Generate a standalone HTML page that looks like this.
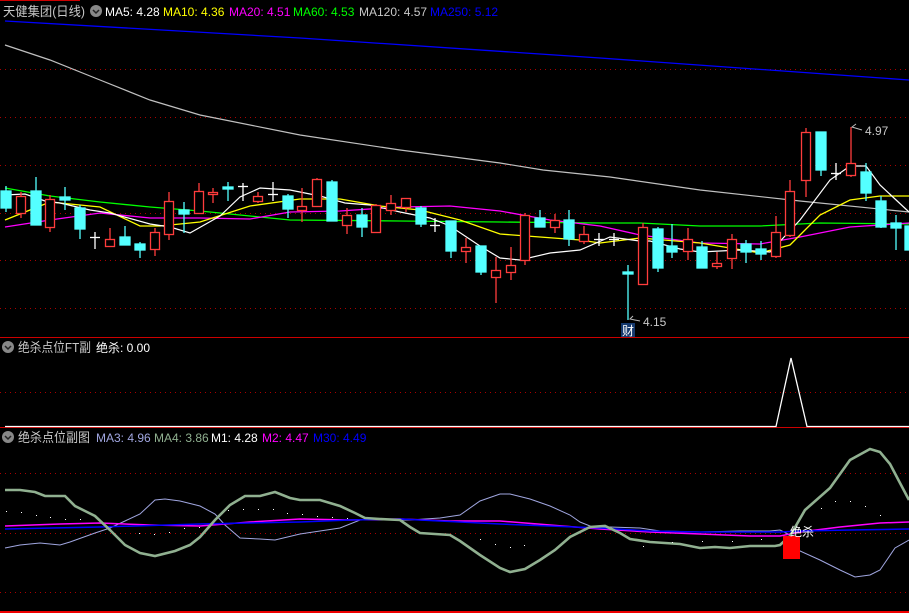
<!DOCTYPE html>
<html><head><meta charset="utf-8"><style>
html,body{margin:0;padding:0;background:#000;width:909px;height:613px;overflow:hidden}
svg{display:block}
text{font-family:"Liberation Sans","Noto Sans CJK SC",sans-serif;font-size:12px}
</style></head><body>
<svg width="909" height="613" viewBox="0 0 909 613" xmlns="http://www.w3.org/2000/svg">
<rect width="909" height="613" fill="#000"/>
<line x1="0" y1="0.5" x2="80" y2="0.5" stroke="#c00"/>
<g stroke="#a00" stroke-dasharray="1,4" stroke-width="1">
<line x1="0" y1="69.5" x2="909" y2="69.5"/><line x1="0" y1="117.5" x2="909" y2="117.5"/>
<line x1="0" y1="165.5" x2="909" y2="165.5"/><line x1="0" y1="213.5" x2="909" y2="213.5"/>
<line x1="0" y1="260.5" x2="909" y2="260.5"/><line x1="0" y1="308.5" x2="909" y2="308.5"/>
<line x1="0" y1="392.5" x2="909" y2="392.5"/>
<line x1="0" y1="473.5" x2="909" y2="473.5"/><line x1="0" y1="533.5" x2="909" y2="533.5"/><line x1="0" y1="592.5" x2="909" y2="592.5"/>
</g>
<line x1="0" y1="337.5" x2="909" y2="337.5" stroke="#c00"/>
<line x1="0" y1="427.5" x2="909" y2="427.5" stroke="#c00"/>
<line x1="0" y1="612" x2="909" y2="612" stroke="#e00" stroke-width="2"/>

<polyline fill="none" stroke="#0000ff" stroke-width="1.3" points="5,21 300,38 600,58 909,80"/>
<polyline fill="none" stroke="#c0c0c0" stroke-width="1.2" points="5,45 50,60 100,80 150,100 200,115 300,135 400,150 500,163 543,170 610,177 700,190 800,201 909,212"/>
<polyline fill="none" stroke="#00ff00" stroke-width="1.3" points="5,188 50,196 100,202 150,207 200,211 290,220 400,221 500,222 600,223 640,223 700,226 760,226 820,223 909,224"/>
<polyline fill="none" stroke="#ff00ff" stroke-width="1.3" points="5,227 50,220 100,213 150,218 200,218 250,219 290,212 340,211 400,207 450,206 500,211 550,220 600,226 640,235 700,243 760,244 800,237 850,227 909,223"/>
<polyline fill="none" stroke="#ffff00" stroke-width="1.3" points="5,220 30,210 50,202 100,207 140,226 160,226 200,222 250,206 300,199 340,199 380,206 420,210 460,220 500,234 540,237 580,240 600,243 640,238 700,243 760,253 790,245 820,215 850,200 880,196 909,196"/>
<polyline fill="none" stroke="#ffffff" stroke-width="1.2" points="5,195 25,194 45,201 60,203 90,210 110,213 150,224 170,227 190,233 220,216 240,197 260,188 290,190 320,196 345,203 370,205 400,212 430,218 450,226 480,246 500,258 520,260 550,253 580,250 610,237 640,241 650,241 680,249 700,252 740,250 770,252 800,220 830,180 850,166 866,166 880,185 909,212"/>

<g stroke-width="1.3">
<g stroke="#54ffff" fill="#54ffff">
<line x1="6" y1="186" x2="6" y2="212"/><rect x="1" y="191" width="10" height="17"/>
<line x1="36" y1="177" x2="36" y2="225"/><rect x="31" y="191" width="10" height="34"/>
<line x1="65" y1="187" x2="65" y2="210"/><rect x="60" y="197" width="10" height="3"/>
<line x1="80" y1="205" x2="80" y2="239"/><rect x="75" y="208" width="10" height="21"/>
<line x1="125" y1="226" x2="125" y2="245"/><rect x="120" y="237" width="10" height="8"/>
<line x1="140" y1="242" x2="140" y2="258"/><rect x="135" y="244" width="10" height="6"/>
<line x1="184" y1="202" x2="184" y2="233"/><rect x="179" y="210" width="10" height="4"/>
<line x1="228" y1="182" x2="228" y2="201"/><rect x="223" y="187" width="10" height="2"/>
<line x1="288" y1="194" x2="288" y2="218"/><rect x="283" y="196" width="10" height="13"/>
<line x1="332" y1="180" x2="332" y2="221"/><rect x="327" y="182" width="10" height="39"/>
<line x1="362" y1="208" x2="362" y2="237"/><rect x="357" y="215" width="10" height="12"/>
<line x1="421" y1="206" x2="421" y2="227"/><rect x="416" y="208" width="10" height="16"/>
<line x1="451" y1="221" x2="451" y2="258"/><rect x="446" y="221" width="10" height="30"/>
<line x1="481" y1="246" x2="481" y2="275"/><rect x="476" y="246" width="10" height="26"/>
<line x1="540" y1="210" x2="540" y2="227"/><rect x="535" y="218" width="10" height="9"/>
<line x1="569" y1="210" x2="569" y2="246"/><rect x="564" y="220" width="10" height="19"/>
<line x1="628" y1="265" x2="628" y2="320"/><rect x="623" y="272" width="10" height="2"/>
<line x1="658" y1="227" x2="658" y2="272"/><rect x="653" y="229" width="10" height="39"/>
<line x1="672" y1="224" x2="672" y2="258"/><rect x="667" y="246" width="10" height="6"/>
<line x1="702" y1="241" x2="702" y2="268"/><rect x="697" y="247" width="10" height="21"/>
<line x1="746" y1="240" x2="746" y2="263"/><rect x="741" y="244" width="10" height="8"/>
<line x1="761" y1="241" x2="761" y2="260"/><rect x="756" y="249" width="10" height="5"/>
<line x1="821" y1="132" x2="821" y2="176"/><rect x="816" y="132" width="10" height="38"/>
<line x1="866" y1="163" x2="866" y2="201"/><rect x="861" y="172" width="10" height="21"/>
<line x1="881" y1="196" x2="881" y2="228"/><rect x="876" y="201" width="10" height="26"/>
<line x1="896" y1="215" x2="896" y2="250"/><rect x="891" y="223" width="10" height="5"/>
<rect x="905" y="226" width="10" height="24"/>
</g>
<g stroke="#ff3c3c" fill="none">
<line x1="21" y1="192" x2="21" y2="218"/><rect x="16.5" y="196.5" width="9" height="17" fill="#000"/>
<line x1="50" y1="195" x2="50" y2="232"/><rect x="45.5" y="199.5" width="9" height="28" fill="#000"/>
<line x1="110" y1="228" x2="110" y2="246"/><rect x="105.5" y="239.5" width="9" height="7" fill="#000"/>
<line x1="155" y1="228" x2="155" y2="256"/><rect x="150.5" y="232.5" width="9" height="17" fill="#000"/>
<line x1="169" y1="192" x2="169" y2="240"/><rect x="164.5" y="201.5" width="9" height="33" fill="#000"/>
<line x1="199" y1="183" x2="199" y2="214"/><rect x="194.5" y="191.5" width="9" height="22" fill="#000"/>
<line x1="213" y1="188" x2="213" y2="203"/><rect x="208.5" y="192.5" width="9" height="2" fill="#000"/>
<line x1="258" y1="192" x2="258" y2="203"/><rect x="253.5" y="196.5" width="9" height="5" fill="#000"/>
<line x1="302" y1="188" x2="302" y2="222"/><rect x="297.5" y="206.5" width="9" height="4" fill="#000"/>
<line x1="317" y1="178" x2="317" y2="206"/><rect x="312.5" y="179.5" width="9" height="27" fill="#000"/>
<line x1="347" y1="208" x2="347" y2="234"/><rect x="342.5" y="215.5" width="9" height="10" fill="#000"/>
<line x1="376" y1="204" x2="376" y2="232"/><rect x="371.5" y="205.5" width="9" height="27" fill="#000"/>
<line x1="391" y1="195" x2="391" y2="215"/><rect x="386.5" y="203.5" width="9" height="7" fill="#000"/>
<line x1="406" y1="198" x2="406" y2="212"/><rect x="401.5" y="198.5" width="9" height="9" fill="#000"/>
<line x1="466" y1="238" x2="466" y2="263"/><rect x="461.5" y="247.5" width="9" height="4" fill="#000"/>
<line x1="496" y1="257" x2="496" y2="303"/><rect x="491.5" y="270.5" width="9" height="7" fill="#000"/>
<line x1="511" y1="247" x2="511" y2="280"/><rect x="506.5" y="265.5" width="9" height="7" fill="#000"/>
<line x1="525" y1="213" x2="525" y2="265"/><rect x="520.5" y="215.5" width="9" height="45" fill="#000"/>
<line x1="555" y1="214" x2="555" y2="233"/><rect x="550.5" y="220.5" width="9" height="7" fill="#000"/>
<line x1="584" y1="226" x2="584" y2="244"/><rect x="579.5" y="234.5" width="9" height="7" fill="#000"/>
<line x1="643" y1="223" x2="643" y2="284"/><rect x="638.5" y="227.5" width="9" height="57" fill="#000"/>
<line x1="688" y1="228" x2="688" y2="260"/><rect x="683.5" y="239.5" width="9" height="12" fill="#000"/>
<line x1="717" y1="252" x2="717" y2="269"/><rect x="712.5" y="263.5" width="9" height="3" fill="#000"/>
<line x1="732" y1="234" x2="732" y2="269"/><rect x="727.5" y="239.5" width="9" height="19" fill="#000"/>
<line x1="776" y1="216" x2="776" y2="258"/><rect x="771.5" y="232.5" width="9" height="24" fill="#000"/>
<line x1="790" y1="180" x2="790" y2="237"/><rect x="785.5" y="191.5" width="9" height="44" fill="#000"/>
<line x1="806" y1="128" x2="806" y2="197"/><rect x="801.5" y="132.5" width="9" height="48" fill="#000"/>
<line x1="851" y1="127" x2="851" y2="177"/><rect x="846.5" y="163.5" width="9" height="12" fill="#000"/>
</g>
<g stroke="#fff">
<line x1="95" y1="232" x2="95" y2="249"/><line x1="90" y1="237.5" x2="100" y2="237.5"/>
<line x1="243" y1="183" x2="243" y2="201"/><line x1="238" y1="186.5" x2="248" y2="186.5"/>
<line x1="273" y1="182" x2="273" y2="201"/><line x1="268" y1="194.5" x2="278" y2="194.5"/>
<line x1="435" y1="218" x2="435" y2="232"/><line x1="430" y1="225.5" x2="440" y2="225.5"/>
<line x1="599" y1="233" x2="599" y2="246"/><line x1="594" y1="239.5" x2="604" y2="239.5"/>
<line x1="614" y1="233" x2="614" y2="246"/><line x1="609" y1="239.5" x2="619" y2="239.5"/>
<line x1="836" y1="163" x2="836" y2="180"/><line x1="831" y1="173.5" x2="841" y2="173.5"/>
</g>
</g>
<polyline fill="none" stroke="#bbb" points="862,130 852,127 856,124"/>
<text x="865" y="135" fill="#c8c8c8">4.97</text>
<polyline fill="none" stroke="#bbb" points="640,321 630,319 633,316"/>
<text x="643" y="326" fill="#c8c8c8">4.15</text>
<rect x="621" y="323" width="14" height="14" fill="#15396e"/>
<text x="622" y="335" fill="#fff">财</text>

<text x="3" y="16" fill="#c8c8c8" textLength="82" lengthAdjust="spacingAndGlyphs" style="font-size:13px">天健集团(日线)</text>
<circle cx="96" cy="11" r="6" fill="#888"/><polyline points="93,10 96,13 99,10" fill="none" stroke="#222" stroke-width="1.5"/>
<text x="105" y="16" fill="#fff">MA5: 4.28</text>
<text x="163" y="16" fill="#ffff00">MA10: 4.36</text>
<text x="229" y="16" fill="#ff00ff">MA20: 4.51</text>
<text x="293" y="16" fill="#00ff00">MA60: 4.53</text>
<text x="359" y="16" fill="#c8c8c8">MA120: 4.57</text>
<text x="430" y="16" fill="#0000ff">MA250: 5.12</text>

<circle cx="8" cy="347" r="6" fill="#888"/><polyline points="5,346 8,349 11,346" fill="none" stroke="#222" stroke-width="1.5"/>
<text x="18" y="352" fill="#c8c8c8" textLength="73" lengthAdjust="spacingAndGlyphs" style="font-size:13px">绝杀点位FT副</text>
<text x="96" y="352" fill="#fff">绝杀: 0.00</text>

<polyline fill="none" stroke="#fff" stroke-width="1.3" points="5,426.5 776,426.5 791,358 807,426.5 909,426.5"/>

<circle cx="8" cy="437" r="6" fill="#888"/><polyline points="5,436 8,439 11,436" fill="none" stroke="#222" stroke-width="1.5"/>
<text x="18" y="442" fill="#c8c8c8" textLength="72" lengthAdjust="spacingAndGlyphs" style="font-size:13px">绝杀点位副图</text>
<text x="96" y="442" fill="#a0a6e0">MA3: 4.96</text>
<text x="154" y="442" fill="#90b090">MA4: 3.86</text>
<text x="211" y="442" fill="#fff">M1: 4.28</text>
<text x="262" y="442" fill="#ff00ff">M2: 4.47</text>
<text x="313" y="442" fill="#0000ff">M30: 4.49</text>

<polyline fill="none" stroke="#a0a6e0" stroke-width="1" points="5,548 20,545 40,543 60,545 70,542 95,533 110,528 125,521 140,514 155,500 165,499 180,501 200,506 215,514 225,525 240,538 260,539 275,540 300,534 320,531 340,528 360,520 390,520 410,520 425,519 440,518 460,515 480,501 500,494 510,494 530,499 550,506 570,515 580,522 595,528 610,527 640,528 660,531 700,532 740,531 770,531 780,530 790,535 800,551 820,560 840,570 855,577 870,575 880,570 895,548 909,540"/>
<polyline fill="none" stroke="#ff00ff" stroke-width="1.5" points="5,526 60,524 100,523 150,525 200,526 250,522 300,519 350,520 400,519 450,521 500,521 550,525 600,529 650,532 700,534 750,536 780,536 800,532 840,527 880,523 909,522"/>
<polyline fill="none" stroke="#0000ff" stroke-width="1.5" points="5,529 100,527 200,524 300,522 350,520 400,519 500,524 600,528 650,531 700,532 780,532 800,531 850,530 909,529"/>
<polyline fill="none" stroke="#90b090" stroke-width="2.6" points="5,490 20,490 35,492 45,496 65,496 75,506 85,511 95,516 110,530 125,545 140,553 155,556 175,551 190,545 200,537 215,520 230,505 245,496 260,496 275,492 290,498 300,500 320,500 340,506 355,513 365,518 380,519 400,520 410,527 420,533 435,534 450,535 460,541 480,555 500,568 510,572 525,569 540,560 555,550 570,537 590,527 605,526 620,533 630,539 650,542 680,544 700,548 715,547 730,548 750,546 775,546 780,545 790,536 805,510 830,488 850,460 870,449 880,452 890,464 900,483 909,500"/>
<g fill="#fff">
<rect x="6" y="511" width="1" height="1"/><rect x="21" y="512" width="1" height="1"/><rect x="36" y="515" width="1" height="1"/><rect x="50" y="517" width="1" height="1"/><rect x="65" y="519" width="1" height="1"/><rect x="80" y="519" width="1" height="1"/>
<rect x="139" y="533" width="1" height="1"/><rect x="154" y="534" width="1" height="1"/><rect x="169" y="532" width="1" height="1"/><rect x="184" y="528" width="1" height="1"/><rect x="199" y="527" width="1" height="1"/>
<rect x="228" y="510" width="1" height="1"/><rect x="243" y="509" width="1" height="1"/><rect x="258" y="509" width="1" height="1"/><rect x="273" y="509" width="1" height="1"/><rect x="287" y="513" width="1" height="1"/><rect x="302" y="514" width="1" height="1"/><rect x="317" y="516" width="1" height="1"/><rect x="332" y="517" width="1" height="1"/><rect x="347" y="518" width="1" height="1"/>
<rect x="480" y="539" width="1" height="1"/><rect x="495" y="544" width="1" height="1"/><rect x="510" y="547" width="1" height="1"/><rect x="524" y="545" width="1" height="1"/>
<rect x="643" y="546" width="1" height="1"/><rect x="672" y="542" width="1" height="1"/><rect x="702" y="541" width="1" height="1"/><rect x="732" y="541" width="1" height="1"/><rect x="761" y="539" width="1" height="1"/>
<rect x="821" y="508" width="1" height="1"/><rect x="835" y="501" width="1" height="1"/><rect x="850" y="501" width="1" height="1"/><rect x="865" y="506" width="1" height="1"/><rect x="880" y="515" width="1" height="1"/>
</g>
<rect x="783" y="536" width="17" height="23" fill="#ff0000"/>
<text x="790" y="536" fill="#fff">绝杀</text>
</svg>
</body></html>
